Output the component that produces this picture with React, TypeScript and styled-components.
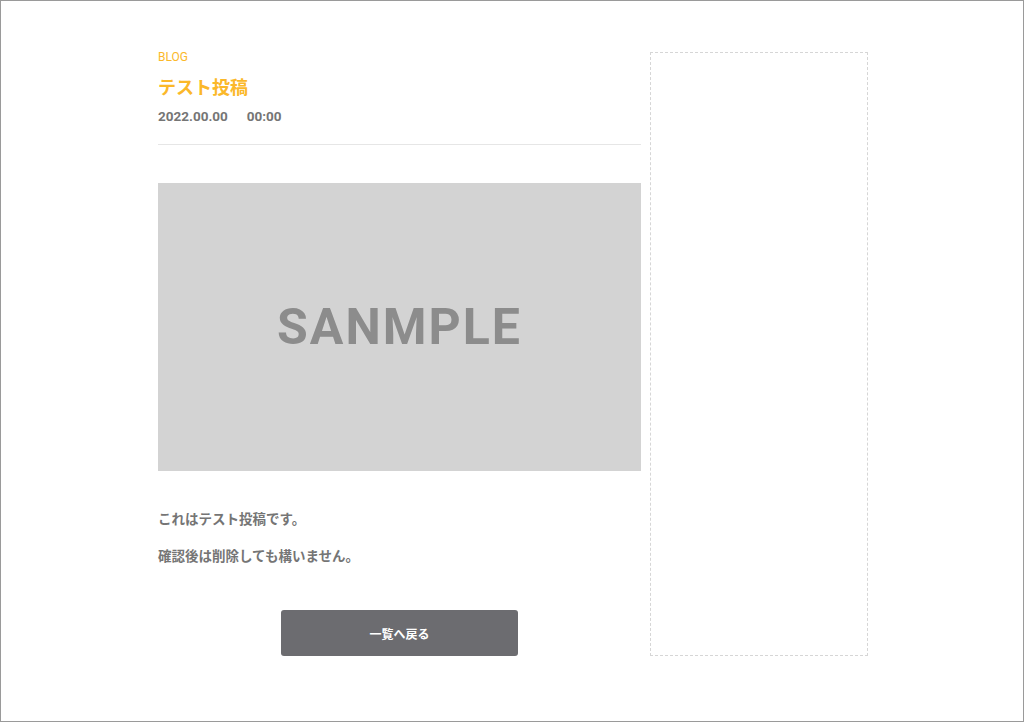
import styled, { createGlobalStyle } from "styled-components";

const COLOR = {
  accent: "#fbb829",
  text: "#757575",
  line: "#e6e6e6",
  dash: "#d6d6d6",
  photo: "#d3d3d3",
  photoText: "#8c8c8c",
  button: "#6c6c70",
};

const GlobalStyle = createGlobalStyle`
  html, body {
    margin: 0;
    padding: 0;
    background: #fff;
  }
  body {
    font-family: Roboto, "Noto Sans CJK JP", sans-serif;
  }
  * {
    box-sizing: border-box;
  }
`;

const Frame = styled.div`
  width: 1024px;
  height: 722px;
  border: 1px solid #9a9a9a;
  overflow: hidden;
`;

const Container = styled.div`
  display: flex;
  gap: 9px;
  width: 710px;
  margin: 0 auto;
  padding-top: 50px;
  transform: translateX(1px);
`;

const Main = styled.main`
  width: 483px;
  display: flex;
  flex-direction: column;
`;

const Header = styled.header`
  padding-bottom: 19px;
  border-bottom: 1px solid ${COLOR.line};
`;

const Category = styled.div`
  font-size: 12px;
  line-height: 12px;
  color: ${COLOR.accent};
`;

const Title = styled.h1`
  margin: 13px 0 0;
  font-size: 18px;
  line-height: 24px;
  font-weight: 700;
  color: ${COLOR.accent};
`;

const Meta = styled.div`
  display: flex;
  gap: 19px;
  margin-top: 7px;
  font-size: 13.5px;
  line-height: 18px;
  font-weight: 700;
  color: ${COLOR.text};
`;

const Photo = styled.div`
  margin-top: 38px;
  height: 288px;
  background: ${COLOR.photo};
  display: flex;
  align-items: center;
  justify-content: center;
  font-family: Roboto, sans-serif;
  font-size: 50px;
  font-weight: 700;
  letter-spacing: 2px;
  color: ${COLOR.photoText};
`;

const Body = styled.div`
  margin-top: 38px;
  display: flex;
  flex-direction: column;
  gap: 17px;
`;

const Paragraph = styled.p`
  margin: 0;
  font-size: 13.5px;
  line-height: 20px;
  font-weight: 700;
  color: ${COLOR.text};
`;

const BackButton = styled.button`
  all: unset;
  cursor: pointer;
  align-self: center;
  margin-top: 44px;
  width: 237px;
  height: 46px;
  border-radius: 3px;
  background: ${COLOR.button};
  color: #fff;
  font-size: 12px;
  font-weight: 700;
  display: flex;
  align-items: center;
  justify-content: center;
`;

const Sidebar = styled.aside`
  width: 218px;
  height: 604px;
  margin-top: 1px;
  border: 1px dashed ${COLOR.dash};
`;

export default function App() {
  return (
    <Frame>
      <GlobalStyle />
      <Container>
        <Main>
          <Header>
            <Category>BLOG</Category>
            <Title>テスト投稿</Title>
            <Meta>
              <time>2022.00.00</time>
              <time>00:00</time>
            </Meta>
          </Header>
          <Photo>SANMPLE</Photo>
          <Body>
            <Paragraph>これはテスト投稿です。</Paragraph>
            <Paragraph>確認後は削除しても構いません。</Paragraph>
          </Body>
          <BackButton>一覧へ戻る</BackButton>
        </Main>
        <Sidebar />
      </Container>
    </Frame>
  );
}
